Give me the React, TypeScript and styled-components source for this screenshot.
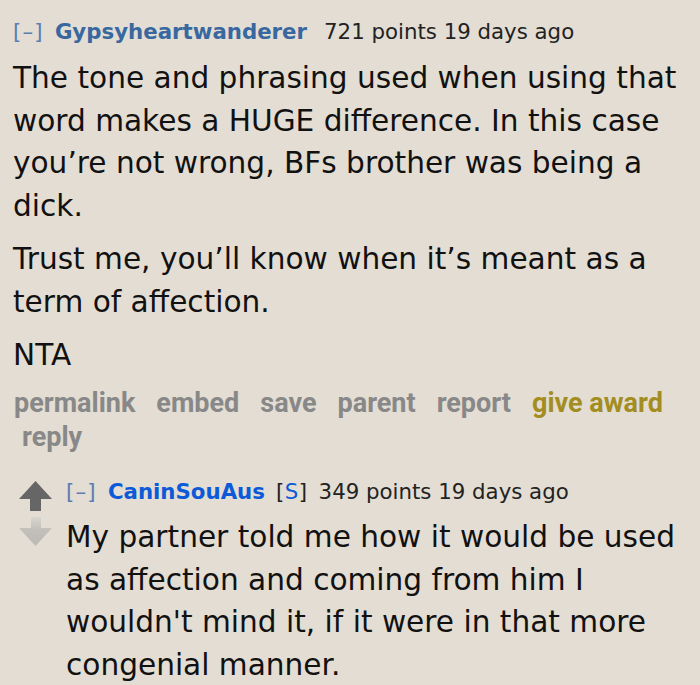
import React from "react";
import styled, { createGlobalStyle } from "styled-components";

const GlobalStyle = createGlobalStyle`
	html, body {
		margin: 0;
		padding: 0;
		background: #e3ddd3;
	}
	body {
		font-family: "DejaVu Sans", Verdana, sans-serif;
		color: #111;
	}
`;

const Page = styled.div`
	width: 700px;
	height: 685px;
	overflow: hidden;
	box-sizing: border-box;
	padding: 16.5px 4px 0 13px;
	background: #e3ddd3;
`;

const Comment = styled.div`
	display: flex;
	align-items: flex-start;
`;

const Child = styled.div`
	margin-top: 23.5px;
`;

const MidCol = styled.div`
	display: flex;
	flex-direction: column;
	gap: 6px;
	width: 33px;
	margin: 4px 14px 0 6px;
	flex-shrink: 0;
`;

const Entry = styled.div`
	flex: 1;
	min-width: 0;
`;

const Tagline = styled.p`
	display: flex;
	align-items: baseline;
	margin: 0;
	font-size: 21.3px;
	line-height: 30px;
	color: #222;
	white-space: nowrap;
`;

const Expand = styled.span`
	color: #5a7db3;
	letter-spacing: 1.2px;
	margin-right: 11px;
`;

const Author = styled.span<{ $submitter?: boolean; $gap: number }>`
	font-weight: bold;
	color: ${(p) => (p.$submitter ? "#0c5ad8" : "#38689f")};
	margin-right: ${(p) => p.$gap}px;
`;

const Attrs = styled.span`
	margin-right: 11px;
	letter-spacing: 0.5px;
	color: #222;

	b {
		font-weight: normal;
		color: #0c5ad8;
	}
`;

const Body = styled.div<{ $top: number }>`
	margin-top: ${(p) => p.$top}px;
	font-size: 29.6px;
	line-height: 42.5px;
	color: #111;

	p {
		margin: 0 0 11px;
	}
	p:last-child {
		margin-bottom: 0;
	}
`;

const Buttons = styled.div`
	margin-top: 9px;
`;

const ButtonRow = styled.ul<{ $indent?: number }>`
	display: flex;
	gap: 21px;
	list-style: none;
	margin: 0;
	padding: 0 0 0 ${(p) => p.$indent ?? 1}px;
	font-family: Roboto, "Liberation Sans", sans-serif;
	font-weight: bold;
	font-size: 27px;
	line-height: 34px;
	white-space: nowrap;
`;

const ButtonLink = styled.li<{ $award?: boolean }>`
	color: ${(p) => (p.$award ? "#a38d22" : "#888888")};
`;

const Arrow = styled.svg`
	display: block;
	width: 33px;
`;

function UpArrow() {
	return (
		<Arrow viewBox="0 0 33 30" height="30">
			<polygon points="16.5,0 33,18 22,18 22,30 11,30 11,18 0,18" fill="#666666" />
		</Arrow>
	);
}

function DownArrow() {
	return (
		<Arrow viewBox="0 0 33 29" height="29">
			<defs>
				<linearGradient id="dn" x1="0" y1="0" x2="0" y2="1">
					<stop offset="0" stopColor="#d8d4ce" />
					<stop offset="0.45" stopColor="#c2bfba" />
					<stop offset="1" stopColor="#bdbab5" />
				</linearGradient>
			</defs>
			<polygon points="12,0 22,0 22,11 33,11 16.5,29 0,11 12,11" fill="url(#dn)" />
		</Arrow>
	);
}

const buttons = ["permalink", "embed", "save", "parent", "report"];

export default function App() {
	return (
		<>
			<GlobalStyle />
			<Page>
				<Entry>
					<Tagline>
						<Expand>[–]</Expand>
						<Author $gap={17}>Gypsyheartwanderer</Author>
						<span>721 points 19 days ago</span>
					</Tagline>
					<Body $top={10.6}>
						<p>
							The tone and phrasing used when using that word makes a HUGE difference. In this
							case you’re not wrong, BFs brother was being a dick.
						</p>
						<p>Trust me, you’ll know when it’s meant as a term of affection.</p>
						<p>NTA</p>
					</Body>
					<Buttons>
						<ButtonRow>
							{buttons.map((b) => (
								<ButtonLink key={b}>{b}</ButtonLink>
							))}
							<ButtonLink $award>give award</ButtonLink>
						</ButtonRow>
						<ButtonRow $indent={9}>
							<ButtonLink>reply</ButtonLink>
						</ButtonRow>
					</Buttons>
				</Entry>

				<Child>
					<Comment>
						<MidCol>
							<UpArrow />
							<DownArrow />
						</MidCol>
						<Entry>
							<Tagline>
								<Expand>[–]</Expand>
								<Author $submitter $gap={11}>CaninSouAus</Author>
								<Attrs>
									[<b>S</b>]
								</Attrs>
								<span>349 points 19 days ago</span>
							</Tagline>
							<Body $top={9}>
								<p>
									My partner told me how it would be used
									<br />
									as affection and coming from him I
									<br />
									wouldn't mind it, if it were in that more
									<br />
									congenial manner.
								</p>
							</Body>
						</Entry>
					</Comment>
				</Child>
			</Page>
		</>
	);
}
